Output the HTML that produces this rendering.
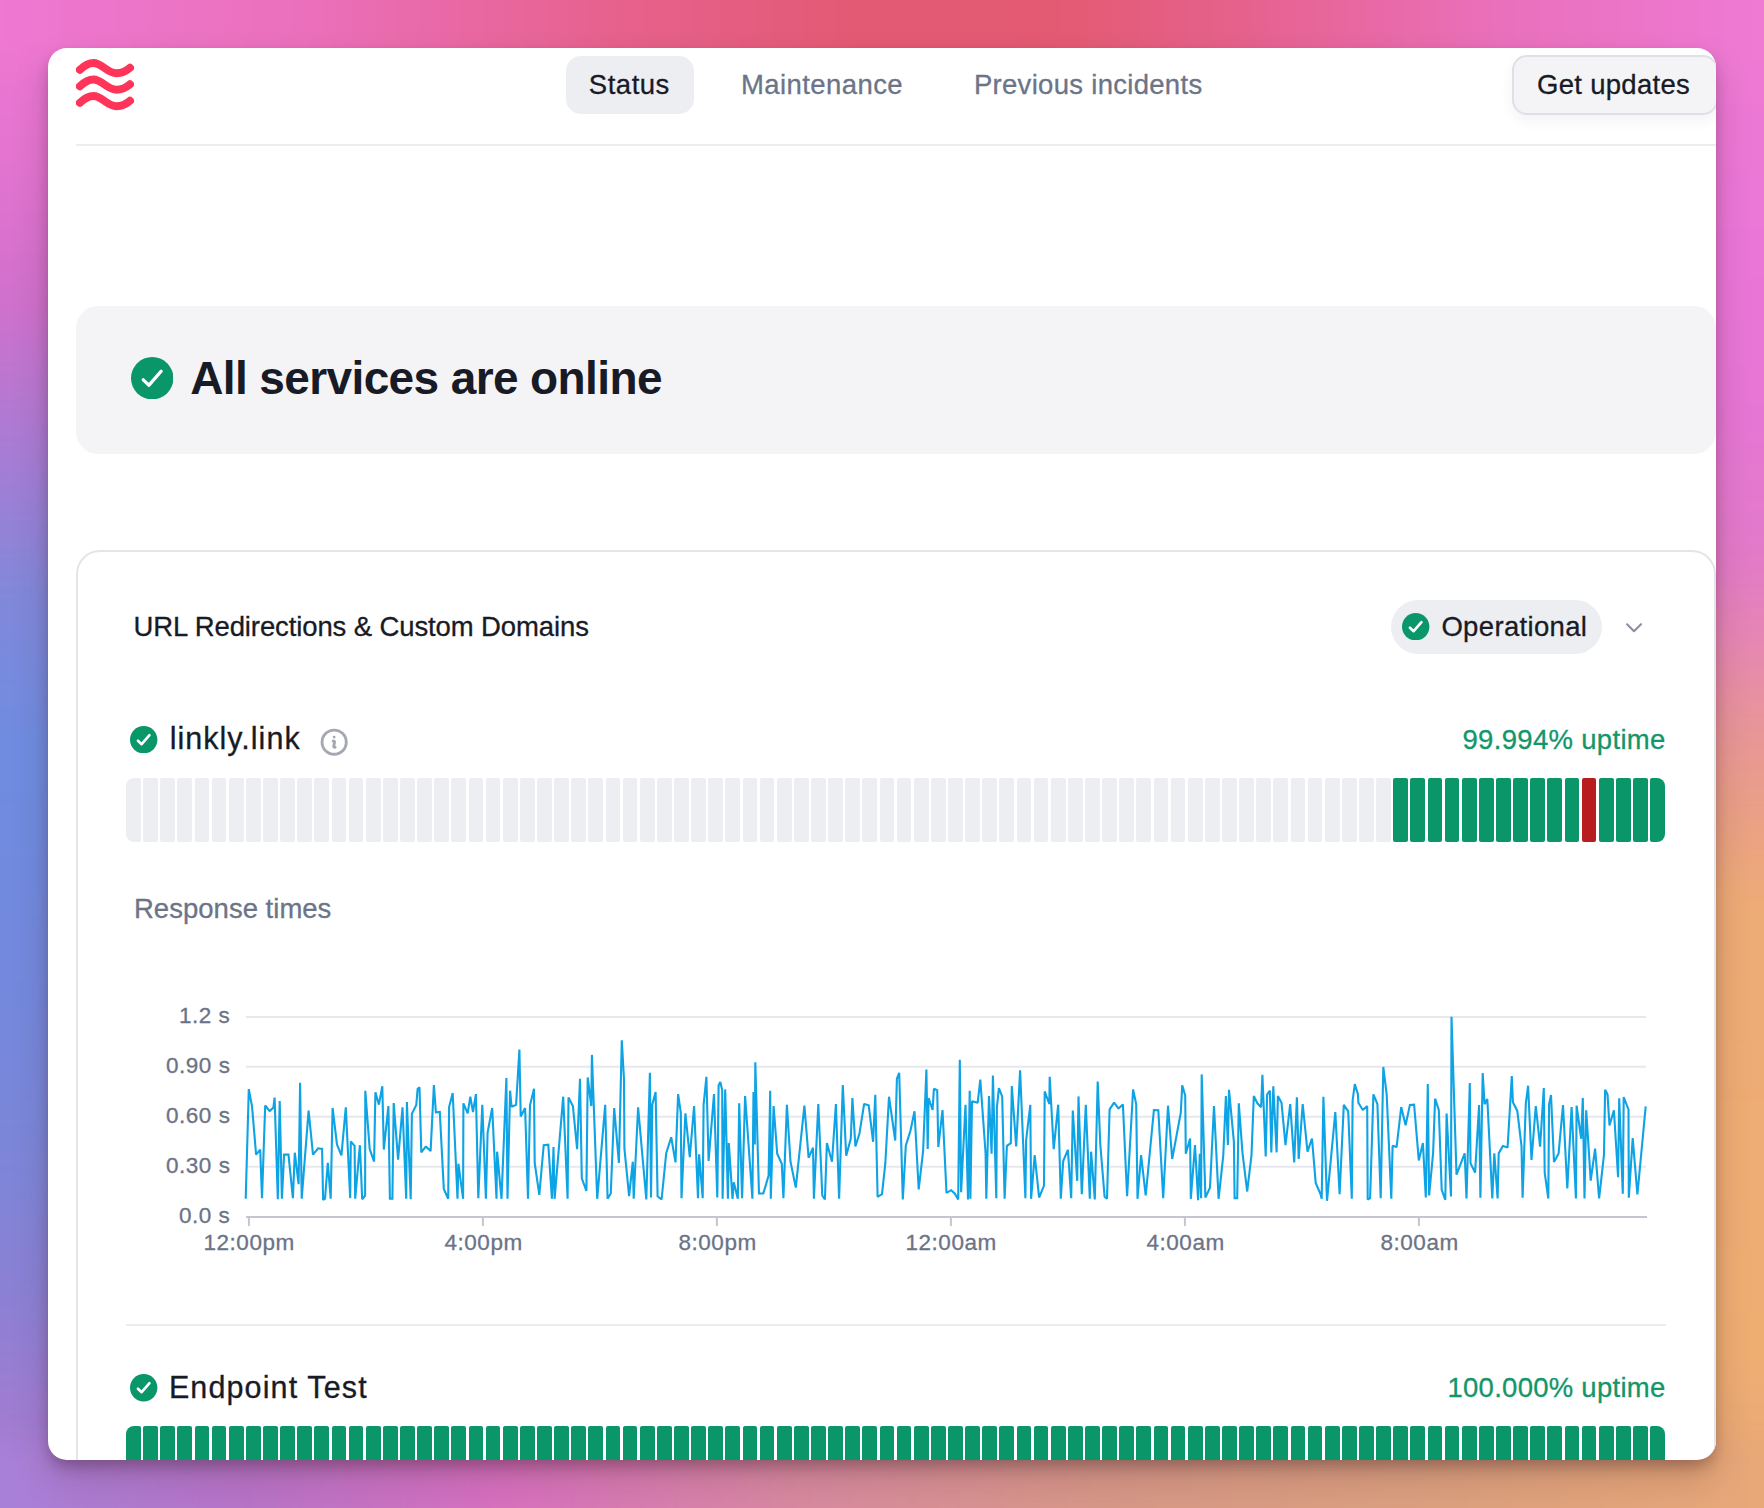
<!DOCTYPE html>
<html><head><meta charset="utf-8">
<style>
*{margin:0;padding:0;box-sizing:border-box}
html,body{width:1764px;height:1508px;overflow:hidden}
body{position:relative;font-family:"Liberation Sans",sans-serif;color:#181b25;background:#d880b0}
.bg{position:absolute}
.win{position:absolute;left:48px;top:48px;width:1668px;height:1412px;background:#fff;border-radius:19px;overflow:hidden;
 box-shadow:0 8px 14px -2px rgba(50,20,30,.30),0 18px 36px rgba(50,20,30,.18)}
.a{position:absolute}
.t{position:absolute;white-space:nowrap;line-height:1;-webkit-text-stroke:0.3px currentColor}
.bars{position:absolute;left:78px;width:1539px;height:64px;display:flex;gap:2.3px}
.bars i{flex:1;height:100%;border-radius:2px;display:block}
.bars i:first-child{border-radius:8px 2px 2px 8px}
.bars i:last-child{border-radius:2px 8px 8px 2px}
.bars i.g{background:#edeef2}
.bars i.k{background:#0a9669}
.bars i.r{background:#b91c1c}
</style></head><body>
<div class="bg" style="left:0;top:0;width:1764px;height:1508px;overflow:hidden"><div style="position:absolute;left:0;top:0;width:1764px;height:1508px;filter:blur(14px)">
<div class="bg" style="left:-60px;top:-60px;width:1884px;height:1628px;background:#d880b0"></div>
<div class="bg" style="left:-60px;top:-60px;width:1884px;height:180px;background:linear-gradient(to right, #ee78d2 3.18%, #eb70bc 19.11%, #e7628f 35.03%, #e35a75 48.30%, #e35a72 58.92%, #e6628e 69.53%, #ea70bc 82.80%, #ee7ad4 96.82%)"></div>
<div class="bg" style="left:-60px;top:1400px;width:1884px;height:170px;background:linear-gradient(to right, #a880d8 3.18%, #b874c8 16.45%, #d870c0 29.72%, #d88aa0 45.65%, #d89888 61.57%, #dca080 77.49%, #e8a878 96.82%)"></div>
<div class="bg" style="left:-60px;top:60px;width:180px;height:1380px;background:linear-gradient(to bottom, #ee78d2 -4.35%, #e474d0 6.52%, #d070cc 17.39%, #a87cd4 28.26%, #8088da 39.13%, #6e8ce0 50.00%, #7488dc 68.12%, #7c86d8 78.99%, #8c80d4 89.86%, #a07cd0 98.55%, #a87cd0 104.93%)"></div>
<div class="bg" style="left:1644px;top:60px;width:180px;height:1380px;background:linear-gradient(to bottom, #ee7ad2 -4.35%, #ea76d8 13.77%, #e676d4 26.09%, #e27ac8 36.23%, #e688b0 42.75%, #e8949a 47.83%, #e99e88 53.62%, #edab76 60.87%, #eeae72 93.48%, #e8a678 104.93%)"></div>
</div></div>
<div class="win">
  <svg class="a" style="left:28px;top:10px" width="58" height="53" viewBox="0 0 58 53">
    <g fill="none" stroke="#fe3459" stroke-width="7.9" stroke-linecap="round"><path d="M3.8 11.8 C8.5 7.3 12.5 5 17.5 5 C26 5 31 15.3 40.5 15.3 C46 15.3 50.5 12.8 54 9.8"/><path d="M3.8 28.3 C8.5 23.8 12.5 21.5 17.5 21.5 C26 21.5 31 31.8 40.5 31.8 C46 31.8 50.5 29.3 54 26.3"/><path d="M3.8 44.8 C8.5 40.3 12.5 38 17.5 38 C26 38 31 48.3 40.5 48.3 C46 48.3 50.5 45.8 54 42.8"/></g>
  </svg>
  <div class="a" style="left:518px;top:8px;width:128px;height:58px;background:#eceef2;border-radius:15px"></div>
  <div class="a" style="left:1463.5px;top:6.5px;width:206px;height:60.5px;background:#f4f4f6;border:2px solid #dfe0e6;border-radius:15px;box-shadow:0 6px 14px rgba(0,0,0,.05)"></div>
  <div class="a" style="left:28px;top:96px;width:1640px;height:2px;background:#ededf0"></div>
  <div class="a" style="left:28px;top:258px;width:1640px;height:148px;background:#f4f4f6;border-radius:22px"></div>
  <svg class="a" style="left:82.80px;top:308.70px" width="42.4" height="42.4" viewBox="0 0 28 28"><circle cx="14" cy="14" r="14" fill="#099669"/><path d="M8.1 15.1L11.9 18.6L19.9 9.4" fill="none" stroke="#fff" stroke-width="2.2" stroke-linecap="round" stroke-linejoin="round"/></svg>
  <div class="a" style="left:28px;top:502px;width:1640px;height:1100px;border:2px solid #e4e5ea;border-radius:24px"></div>
  <div class="a" style="left:1343px;top:552px;width:211px;height:54px;background:#edeef2;border-radius:27px"></div>
  <svg class="a" style="left:1354.30px;top:564.60px" width="27.4" height="27.4" viewBox="0 0 28 28"><circle cx="14" cy="14" r="14" fill="#099669"/><path d="M8.1 15.1L11.9 18.6L19.9 9.4" fill="none" stroke="#fff" stroke-width="2.7" stroke-linecap="round" stroke-linejoin="round"/></svg>
  <svg class="a" style="left:1570px;top:564px" width="32" height="32" viewBox="0 0 32 32"><path d="M9.1 12.3L16 19.2L23 12.2" fill="none" stroke="#8a909d" stroke-width="2.1" stroke-linecap="round" stroke-linejoin="round"/></svg>
  <svg class="a" style="left:82.25px;top:677.95px" width="27.4" height="27.4" viewBox="0 0 28 28"><circle cx="14" cy="14" r="14" fill="#099669"/><path d="M8.1 15.1L11.9 18.6L19.9 9.4" fill="none" stroke="#fff" stroke-width="2.7" stroke-linecap="round" stroke-linejoin="round"/></svg>
  <svg class="a" style="left:269.8px;top:677.8px" width="32.3" height="32.3" viewBox="0 0 24 24"><path d="M11.25 11.25l.041-.02a.75.75 0 0 1 1.063.852l-.708 2.836a.75.75 0 0 0 1.063.853l.041-.021M21 12a9 9 0 1 1-18 0 9 9 0 0 1 18 0Zm-9-3.75h.008v.008H12V8.25Z" fill="none" stroke="#a3a8b2" stroke-width="2.1" stroke-linecap="round" stroke-linejoin="round"/></svg>
  <div class="bars" style="top:730px"><i class="g"></i><i class="g"></i><i class="g"></i><i class="g"></i><i class="g"></i><i class="g"></i><i class="g"></i><i class="g"></i><i class="g"></i><i class="g"></i><i class="g"></i><i class="g"></i><i class="g"></i><i class="g"></i><i class="g"></i><i class="g"></i><i class="g"></i><i class="g"></i><i class="g"></i><i class="g"></i><i class="g"></i><i class="g"></i><i class="g"></i><i class="g"></i><i class="g"></i><i class="g"></i><i class="g"></i><i class="g"></i><i class="g"></i><i class="g"></i><i class="g"></i><i class="g"></i><i class="g"></i><i class="g"></i><i class="g"></i><i class="g"></i><i class="g"></i><i class="g"></i><i class="g"></i><i class="g"></i><i class="g"></i><i class="g"></i><i class="g"></i><i class="g"></i><i class="g"></i><i class="g"></i><i class="g"></i><i class="g"></i><i class="g"></i><i class="g"></i><i class="g"></i><i class="g"></i><i class="g"></i><i class="g"></i><i class="g"></i><i class="g"></i><i class="g"></i><i class="g"></i><i class="g"></i><i class="g"></i><i class="g"></i><i class="g"></i><i class="g"></i><i class="g"></i><i class="g"></i><i class="g"></i><i class="g"></i><i class="g"></i><i class="g"></i><i class="g"></i><i class="g"></i><i class="g"></i><i class="g"></i><i class="g"></i><i class="k"></i><i class="k"></i><i class="k"></i><i class="k"></i><i class="k"></i><i class="k"></i><i class="k"></i><i class="k"></i><i class="k"></i><i class="k"></i><i class="k"></i><i class="r"></i><i class="k"></i><i class="k"></i><i class="k"></i><i class="k"></i></div>
  <svg class="a" style="left:-48px;top:-48px" width="1764" height="1508">
    <g stroke="#e7e8ed" stroke-width="2"><line x1="246" y1="1016.9" x2="1646" y2="1016.9"/><line x1="246" y1="1066.8" x2="1646" y2="1066.8"/><line x1="246" y1="1116.7" x2="1646" y2="1116.7"/><line x1="246" y1="1166.7" x2="1646" y2="1166.7"/></g>
    <g stroke="#c3c6d0" stroke-width="2"><line x1="246" y1="1217" x2="1647" y2="1217"/><line x1="248.9" y1="1217" x2="248.9" y2="1226"/><line x1="482.9" y1="1217" x2="482.9" y2="1226"/><line x1="716.9" y1="1217" x2="716.9" y2="1226"/><line x1="950.9" y1="1217" x2="950.9" y2="1226"/><line x1="1184.9" y1="1217" x2="1184.9" y2="1226"/><line x1="1418.9" y1="1217" x2="1418.9" y2="1226"/></g>
    <polyline transform="translate(0,0.5)" points="245.7,1198.2 248.8,1088.6 252.0,1105.6 256.1,1154.1 260.2,1149.1 262.0,1197.6 265.2,1105.0 269.6,1110.7 273.4,1106.9 274.6,1097.1 277.8,1198.8 279.7,1100.4 281.9,1198.2 284.1,1154.1 288.5,1154.1 292.9,1197.6 294.8,1152.2 298.6,1183.7 300.1,1082.3 301.7,1198.2 308.6,1110.1 313.0,1154.1 318.1,1147.8 322.1,1148.5 323.1,1199.5 325.0,1198.2 327.8,1162.3 330.7,1198.2 332.6,1107.5 337.0,1144.1 341.4,1154.8 345.8,1106.9 350.2,1197.6 350.8,1140.9 354.6,1145.3 355.2,1198.2 359.9,1144.7 362.2,1198.8 365.1,1195.1 365.3,1090.3 369.7,1148.5 374.1,1161.1 375.4,1091.8 378.9,1104.1 382.3,1085.7 383.8,1149.1 388.4,1105.6 389.9,1198.2 392.4,1198.2 393.7,1102.5 398.1,1159.2 402.5,1106.9 406.2,1198.2 406.9,1101.6 410.7,1198.8 411.9,1113.2 416.3,1104.4 417.6,1088.6 419.5,1086.8 421.3,1151.9 425.9,1145.9 430.6,1150.6 433.9,1084.5 435.9,1111.9 439.8,1111.5 443.8,1188.4 448.2,1198.3 449.1,1106.6 452.7,1092.5 457.5,1198.3 458.4,1163.2 463.1,1198.3 463.4,1102.8 467.7,1112.8 470.3,1096.2 473.0,1111.5 475.9,1093.6 478.3,1197.7 482.3,1104.2 485.9,1198.3 487.6,1132.0 492.2,1107.5 496.5,1198.3 497.1,1151.2 501.5,1198.3 506.4,1077.4 507.5,1198.3 510.1,1090.2 511.5,1106.2 516.1,1104.2 519.4,1049.1 520.7,1116.1 525.1,1107.5 528.0,1198.3 530.0,1104.8 534.0,1088.2 534.7,1162.5 539.3,1194.4 543.7,1144.6 548.3,1144.2 551.9,1198.3 553.5,1146.6 554.6,1198.3 563.2,1096.2 567.6,1198.3 568.5,1096.9 572.9,1105.5 577.1,1148.6 580.0,1078.3 581.8,1177.8 586.4,1190.4 587.7,1077.0 591.3,1105.5 591.9,1054.4 597.2,1198.3 605.2,1104.4 607.6,1198.3 610.8,1193.0 614.2,1107.5 618.9,1162.5 621.8,1039.8 624.0,1079.0 624.4,1147.9 629.1,1195.7 632.8,1161.2 633.7,1198.3 638.1,1106.8 646.3,1199.0 649.9,1072.3 651.0,1197.0 652.3,1104.2 655.6,1091.6 657.6,1195.7 661.6,1199.0 666.2,1152.6 671.2,1136.7 675.5,1161.9 678.1,1093.6 680.8,1112.1 681.5,1197.7 685.4,1112.8 689.8,1156.6 694.1,1105.5 698.0,1197.7 699.1,1153.9 702.7,1197.7 703.6,1104.2 706.4,1076.3 708.6,1160.5 714.0,1093.6 717.3,1197.0 718.6,1084.9 720.3,1081.6 722.2,1089.6 722.6,1198.3 725.2,1088.9 727.9,1198.3 728.8,1142.6 732.5,1198.3 733.8,1181.8 737.8,1198.3 739.2,1102.8 742.1,1197.7 745.1,1095.5 752.4,1198.3 753.5,1091.6 754.8,1144.0 755.3,1061.7 759.0,1193.0 763.3,1193.0 768.6,1175.1 770.2,1090.2 770.8,1198.3 773.6,1105.5 777.2,1153.2 781.8,1163.2 783.4,1197.7 786.9,1104.4 790.5,1161.2 795.8,1187.1 804.4,1105.2 808.6,1157.2 813.0,1147.3 813.9,1198.3 818.3,1103.5 822.3,1195.0 824.9,1199.0 826.9,1142.6 832.0,1161.2 835.9,1103.5 839.1,1198.3 842.8,1084.5 846.2,1155.2 850.8,1138.0 852.4,1097.5 855.4,1145.9 859.4,1133.3 864.1,1103.5 868.7,1104.8 873.1,1141.3 875.3,1094.2 877.6,1196.3 882.0,1193.7 885.3,1163.2 889.0,1096.2 895.2,1140.0 896.9,1078.3 899.2,1072.3 902.8,1199.0 905.8,1145.3 910.5,1130.0 914.5,1110.8 918.7,1189.0 923.1,1150.6 926.4,1069.0 927.7,1148.6 928.6,1097.5 932.6,1109.5 933.9,1088.2 937.2,1089.6 938.3,1146.6 942.5,1109.5 946.5,1192.4 951.2,1189.7 954.7,1193.0 958.2,1199.0 959.8,1059.3 961.1,1191.7 965.5,1104.4 968.0,1199.0 969.7,1090.2 970.4,1198.3 972.0,1100.8 977.7,1102.2 980.3,1079.0 985.6,1153.2 986.3,1198.3 989.0,1095.5 991.6,1153.2 992.9,1075.0 996.3,1197.7 996.9,1106.8 998.9,1087.6 1002.2,1096.2 1004.6,1198.3 1006.9,1145.3 1010.8,1142.6 1011.8,1085.6 1016.2,1145.9 1020.1,1069.7 1025.4,1197.7 1026.1,1140.0 1030.3,1104.4 1031.1,1198.3 1034.7,1154.6 1039.1,1197.0 1044.0,1185.1 1044.7,1090.9 1049.3,1103.5 1049.7,1076.3 1053.7,1148.6 1058.2,1104.2 1060.8,1198.3 1063.2,1160.5 1067.9,1149.3 1071.2,1197.7 1072.8,1110.1 1077.2,1180.4 1078.5,1095.9 1081.8,1193.7 1085.8,1104.4 1089.8,1198.3 1091.1,1151.2 1094.8,1199.0 1097.7,1081.0 1100.3,1144.0 1104.6,1196.3 1107.0,1198.1 1109.6,1108.8 1114.1,1102.2 1118.5,1108.1 1122.9,1103.9 1127.1,1195.7 1133.1,1088.9 1136.2,1103.5 1137.5,1198.3 1141.1,1154.6 1145.7,1195.0 1153.9,1109.5 1158.3,1109.7 1163.2,1197.7 1168.0,1105.2 1172.2,1158.5 1180.8,1112.1 1182.2,1084.9 1185.2,1094.9 1185.8,1153.2 1190.1,1138.0 1190.8,1198.3 1195.0,1144.6 1198.1,1199.7 1199.8,1153.2 1201.1,1197.7 1201.7,1073.9 1205.4,1197.0 1210.0,1187.1 1214.0,1105.5 1218.6,1198.3 1223.3,1154.6 1225.9,1095.5 1227.9,1144.6 1229.0,1089.3 1233.9,1141.3 1234.6,1197.7 1237.2,1197.7 1238.8,1102.8 1242.5,1152.6 1247.2,1191.0 1251.5,1154.6 1253.8,1095.5 1257.4,1102.8 1261.1,1106.8 1262.4,1074.3 1265.7,1155.9 1267.1,1094.2 1269.9,1090.2 1271.3,1151.9 1273.3,1085.9 1276.6,1151.9 1277.9,1095.5 1281.5,1102.2 1285.5,1144.6 1290.2,1103.5 1294.2,1161.9 1296.9,1096.9 1298.7,1158.5 1302.7,1103.5 1307.5,1151.2 1312.0,1138.0 1315.7,1182.4 1320.3,1193.0 1321.7,1198.3 1323.4,1096.2 1327.0,1200.3 1335.3,1111.5 1339.6,1193.7 1343.8,1104.4 1348.2,1110.8 1351.8,1198.3 1352.6,1100.2 1354.8,1083.6 1357.9,1093.6 1358.4,1102.2 1362.8,1109.5 1367.2,1105.5 1367.7,1199.0 1370.1,1197.7 1373.4,1093.8 1377.4,1103.5 1380.7,1197.7 1383.3,1066.4 1386.7,1094.2 1391.3,1198.3 1392.6,1145.3 1396.6,1146.6 1401.2,1106.6 1405.6,1124.7 1409.9,1104.4 1414.1,1104.2 1418.8,1159.9 1422.9,1142.6 1425.8,1197.0 1427.8,1083.6 1429.1,1195.0 1433.1,1152.6 1435.1,1098.2 1438.8,1109.5 1441.7,1189.4 1445.3,1199.3 1446.6,1113.1 1451.0,1196.0 1451.5,1016.3 1456.5,1174.1 1464.7,1152.9 1466.5,1198.0 1469.8,1082.6 1470.5,1162.8 1475.1,1172.1 1479.1,1104.5 1480.4,1197.3 1482.7,1072.6 1484.6,1103.8 1487.3,1098.5 1492.3,1198.0 1494.3,1152.9 1497.6,1198.0 1498.7,1152.9 1502.9,1145.6 1507.6,1146.9 1511.8,1075.6 1512.9,1101.8 1517.3,1110.4 1521.5,1145.6 1522.6,1197.3 1525.8,1103.1 1528.1,1085.2 1531.5,1159.5 1535.8,1105.5 1540.1,1146.2 1543.8,1087.5 1544.7,1172.1 1548.3,1198.0 1549.1,1103.8 1551.0,1094.5 1554.0,1161.5 1558.6,1152.9 1563.0,1104.5 1567.3,1188.0 1571.6,1106.5 1575.9,1198.0 1576.6,1105.1 1581.2,1138.3 1582.8,1097.4 1584.5,1198.0 1586.2,1109.8 1590.7,1180.1 1595.1,1148.2 1599.1,1198.0 1604.0,1154.2 1605.1,1089.2 1607.5,1093.9 1609.5,1125.0 1613.9,1109.8 1618.1,1176.8 1619.2,1097.8 1622.8,1193.3 1623.7,1096.5 1628.5,1109.1 1628.8,1197.3 1632.7,1137.6 1637.4,1194.0 1645.7,1105.8" fill="none" stroke="#0ea3e4" stroke-width="2.1" stroke-linejoin="miter" stroke-miterlimit="1.5"/>
  </svg>
  <div class="a" style="left:78px;top:1276px;width:1540px;height:2px;background:#ededf0"></div>
  <svg class="a" style="left:82.30px;top:1326.30px" width="27.4" height="27.4" viewBox="0 0 28 28"><circle cx="14" cy="14" r="14" fill="#099669"/><path d="M8.1 15.1L11.9 18.6L19.9 9.4" fill="none" stroke="#fff" stroke-width="2.7" stroke-linecap="round" stroke-linejoin="round"/></svg>
  <div class="bars" style="top:1378px"><i class="k"></i><i class="k"></i><i class="k"></i><i class="k"></i><i class="k"></i><i class="k"></i><i class="k"></i><i class="k"></i><i class="k"></i><i class="k"></i><i class="k"></i><i class="k"></i><i class="k"></i><i class="k"></i><i class="k"></i><i class="k"></i><i class="k"></i><i class="k"></i><i class="k"></i><i class="k"></i><i class="k"></i><i class="k"></i><i class="k"></i><i class="k"></i><i class="k"></i><i class="k"></i><i class="k"></i><i class="k"></i><i class="k"></i><i class="k"></i><i class="k"></i><i class="k"></i><i class="k"></i><i class="k"></i><i class="k"></i><i class="k"></i><i class="k"></i><i class="k"></i><i class="k"></i><i class="k"></i><i class="k"></i><i class="k"></i><i class="k"></i><i class="k"></i><i class="k"></i><i class="k"></i><i class="k"></i><i class="k"></i><i class="k"></i><i class="k"></i><i class="k"></i><i class="k"></i><i class="k"></i><i class="k"></i><i class="k"></i><i class="k"></i><i class="k"></i><i class="k"></i><i class="k"></i><i class="k"></i><i class="k"></i><i class="k"></i><i class="k"></i><i class="k"></i><i class="k"></i><i class="k"></i><i class="k"></i><i class="k"></i><i class="k"></i><i class="k"></i><i class="k"></i><i class="k"></i><i class="k"></i><i class="k"></i><i class="k"></i><i class="k"></i><i class="k"></i><i class="k"></i><i class="k"></i><i class="k"></i><i class="k"></i><i class="k"></i><i class="k"></i><i class="k"></i><i class="k"></i><i class="k"></i><i class="k"></i><i class="k"></i><i class="k"></i><i class="k"></i></div>
  <div class="t" style="left:540.8px;top:22.9px;font-size:27.5px;font-weight:400;letter-spacing:0.52px;color:#181b25">Status</div><div class="t" style="left:693.0px;top:23.0px;font-size:27.5px;font-weight:400;letter-spacing:0.42px;color:#6c7487">Maintenance</div><div class="t" style="left:925.9px;top:23.0px;font-size:27.5px;font-weight:400;letter-spacing:0.3px;color:#6c7487">Previous incidents</div><div class="t" style="left:1489.0px;top:23.0px;font-size:27.5px;font-weight:400;letter-spacing:0.3px;color:#181b25">Get updates</div><div class="t" style="left:142.2px;top:307.0px;font-size:46px;font-weight:700;letter-spacing:-0.614px;color:#181b25;-webkit-text-stroke:0">All services are online</div><div class="t" style="left:85.6px;top:565.2px;font-size:27.5px;font-weight:400;letter-spacing:-0.116px;color:#181b25">URL Redirections &amp; Custom Domains</div><div class="t" style="left:1393.4px;top:565.3px;font-size:27.5px;font-weight:400;letter-spacing:0.34px;color:#181b25">Operational</div><div class="t" style="left:121.7px;top:675.0px;font-size:30.5px;font-weight:400;letter-spacing:1.02px;color:#181b25">linkly.link</div><div class="t" style="left:1414.5px;top:678.0px;font-size:27.5px;font-weight:400;letter-spacing:0.315px;color:#13966a">99.994% uptime</div><div class="t" style="left:86.0px;top:847.3px;font-size:27.5px;font-weight:400;letter-spacing:0.015px;color:#6c7487">Response times</div><div class="t" style="left:120.9px;top:1323.9px;font-size:30.5px;font-weight:400;letter-spacing:1.125px;color:#181b25">Endpoint Test</div><div class="t" style="left:1399.5px;top:1326.0px;font-size:27.5px;font-weight:400;letter-spacing:0.264px;color:#13966a">100.000% uptime</div><div class="t" style="left:130.9px;top:957.0px;font-size:22.5px;font-weight:400;letter-spacing:0.55px;color:#6b7386">1.2 s</div><div class="t" style="left:117.9px;top:1006.9px;font-size:22.5px;font-weight:400;letter-spacing:0.55px;color:#6b7386">0.90 s</div><div class="t" style="left:117.9px;top:1056.8px;font-size:22.5px;font-weight:400;letter-spacing:0.55px;color:#6b7386">0.60 s</div><div class="t" style="left:117.9px;top:1106.8px;font-size:22.5px;font-weight:400;letter-spacing:0.55px;color:#6b7386">0.30 s</div><div class="t" style="left:130.9px;top:1157.1px;font-size:22.5px;font-weight:400;letter-spacing:0.55px;color:#6b7386">0.0 s</div><div class="t" style="left:155.4px;top:1184.2px;font-size:22.5px;font-weight:400;letter-spacing:0.55px;color:#6b7386">12:00pm</div><div class="t" style="left:396.4px;top:1184.2px;font-size:22.5px;font-weight:400;letter-spacing:0.55px;color:#6b7386">4:00pm</div><div class="t" style="left:630.4px;top:1184.2px;font-size:22.5px;font-weight:400;letter-spacing:0.55px;color:#6b7386">8:00pm</div><div class="t" style="left:857.4px;top:1184.2px;font-size:22.5px;font-weight:400;letter-spacing:0.55px;color:#6b7386">12:00am</div><div class="t" style="left:1098.4px;top:1184.2px;font-size:22.5px;font-weight:400;letter-spacing:0.55px;color:#6b7386">4:00am</div><div class="t" style="left:1332.4px;top:1184.2px;font-size:22.5px;font-weight:400;letter-spacing:0.55px;color:#6b7386">8:00am</div>
</div>
</body></html>
